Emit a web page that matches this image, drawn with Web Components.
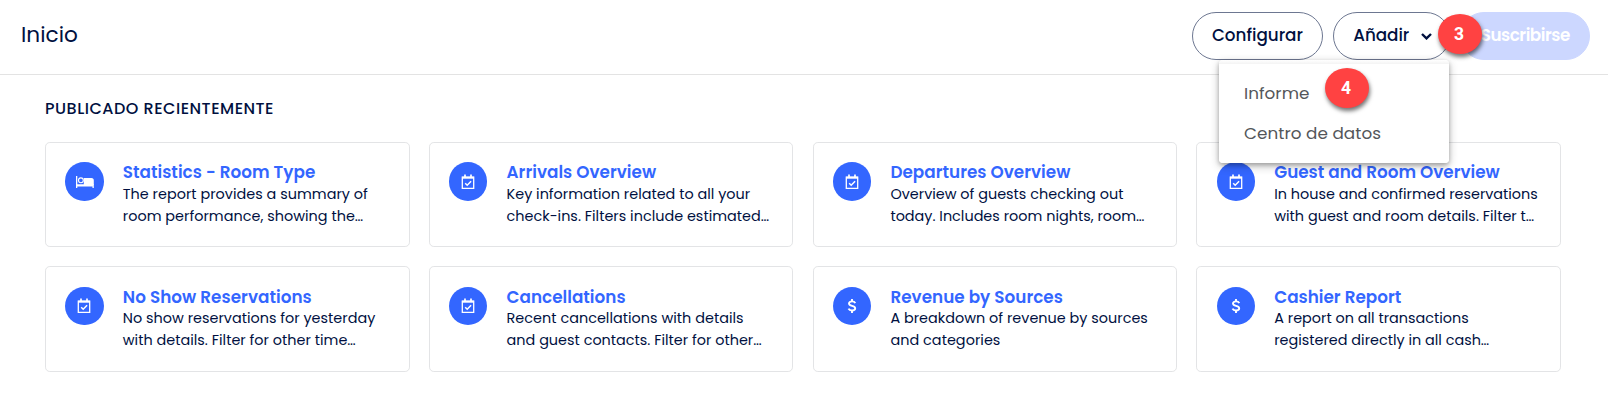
<!DOCTYPE html>
<html lang="es">
<head>
<meta charset="utf-8">
<title>Inicio</title>
<style>
	body {
		margin: 0;
		background: #fff;
		--color-ink: #00103f;
		--color-primary: #3366ff;
		--color-line: #e3e4e6;
		color: var(--color-ink);
		font-family: Poppins, Inter, "Liberation Sans", sans-serif;
		font-feature-settings: "cv11";
	}
</style>
</head>
<body>
<reports-home></reports-home>

<script>
// One line of text, spaced out to the width given in the attribute
class FitLine extends HTMLElement {
	constructor(){
		super();
		this.attachShadow({ mode: 'open' });
		this.shadowRoot.innerHTML = `
			<style>
				:host { display: block; white-space: nowrap; }
			</style>
			<span><slot></slot></span>`;
	}

	connectedCallback(){
		const span = this.shadowRoot.querySelector('span');
		const width = Number(this.getAttribute('width'));
		const natural = span.getBoundingClientRect().width;
		const count = this.textContent.length;
		if (width && natural) {
			this.style.width = width + 'px';
			this.style.letterSpacing = ((width - natural) / count) + 'px';
		}
	}
}

const ICONS = {
	bed: `<svg width="19" height="12" viewBox="-1 0 19 12" fill="#fff">
		<path d="M0 0h1.300v8.300H17.800V12h-1.300v-1.400H1.300V12H0z"/>
		<circle cx="4.900" cy="4.300" r="2.400" fill="none" stroke="#fff" stroke-width="1.100"/>
		<path d="M7.800 2h7.600a2.400 2.400 0 0 1 2.400 2.500V9H7.800z"/>
	</svg>`,
	calendar: `<svg width="14" height="16" viewBox="0 0 14 16" fill="none" stroke="#fff">
		<path d="M1.300 3.200h11.400v11.100H1.300z" stroke-width="1.300"/>
		<path d="M1 3.700h12" stroke-width="2"/>
		<path d="M4 .5v3M10 .5v3" stroke-width="1.700"/>
		<path d="M4.200 9.300l2 2 3.900-4" stroke-width="1.500"/>
	</svg>`,
	dollar: `<svg width="10" height="16" viewBox="0 0 10 16" fill="none" stroke="#fff">
		<path d="M8.300 5.100C7.700 3.900 6.600 3.400 5 3.400c-1.800 0-3 .8-3 2.100 0 3.100 6.200 1.500 6.200 4.800 0 1.400-1.300 2.200-3.200 2.200-1.700 0-2.900-.6-3.500-1.900" stroke-width="1.900"/>
		<path d="M5 1v2.500M5 12.400v2.500" stroke-width="1.900"/>
	</svg>`
};

class ReportCard extends HTMLElement {
	constructor(){
		super();
		this.attachShadow({ mode: 'open' });
		this.shadowRoot.innerHTML = `
			<style>
				:host {
					display: flex;
					gap: 19.2px;
					box-sizing: border-box;
					height: 105.3px;
					padding: 19.35px 19.2px 19.2px;
					border: 1px solid var(--color-line);
					border-radius: 4.8px;
					font-size: 14.4px;
					line-height: 21.6px;
				}
				.icon {
					display: flex;
					flex: none;
					align-items: center;
					justify-content: center;
					width: 38.4px;
					height: 38.4px;
					border-radius: 50%;
					background: var(--color-primary);
				}
				.title {
					color: var(--color-primary);
					font-size: 16.8px;
					font-weight: 600;
				}
			</style>
			<div class="icon">${ICONS[this.getAttribute('icon')]}</div>
			<div>
				<div class="title"><slot name="title"></slot></div>
				<slot></slot>
			</div>`;
	}
}

class PillButton extends HTMLElement {
	constructor(){
		super();
		this.attachShadow({ mode: 'open' });
		this.shadowRoot.innerHTML = `
			<style>
				:host {
					display: flex;
					align-items: center;
					gap: 12px;
					box-sizing: border-box;
					height: 48px;
					padding: 0 19.2px 2px;
					border: 1px solid #6d7791;
					border-radius: 24px;
					font-size: 16.8px;
					font-weight: 500;
					line-height: 24px;
				}
				:host([disabled]) {
					border-color: #ccd7ff;
					background: #ccd7ff;
					color: #fff;
					font-weight: 600;
				}
				::slotted(svg) { margin: 2px -2px 0 0; }
			</style>
			<slot></slot>
			<slot name="suffix"></slot>`;
	}
}

class DropMenu extends HTMLElement {
	constructor(){
		super();
		this.attachShadow({ mode: 'open' });
		this.shadowRoot.innerHTML = `
			<style>
				:host {
					display: flex;
					flex-direction: column;
					box-sizing: border-box;
					width: 230px;
					height: 103px;
					padding: 13px 25px 10px;
					border-radius: 4px;
					background: linear-gradient(#fff, #f5f5f5 3.5px, #fff 4px);
					box-shadow: 0 2px 4px rgba(0,0,0,.24), 0 3px 10px rgba(0,0,0,.24);
					color: #54565a;
					font-size: 16.8px;
					line-height: 40px;
				}
			</style>
			<slot></slot>`;
	}
}

class StepBadge extends HTMLElement {
	constructor(){
		super();
		this.attachShadow({ mode: 'open' });
		this.shadowRoot.innerHTML = `
			<style>
				:host {
					display: flex;
					align-items: center;
					justify-content: center;
					box-sizing: border-box;
					width: 44px;
					height: 40px;
					padding-right: 2px;
					border-radius: 50%;
					background: #ff4242;
					box-shadow: 1px 3px 4px rgba(0,0,0,.55);
					color: #fff;
					font: bold 17.5px Roboto, "Liberation Sans", sans-serif;
				}
			</style>
			<slot></slot>`;
	}
}

const REPORTS = [
	['bed', 'Statistics - Room Type', 192.5, 'The report provides a summary of', 245, 'room performance, showing the…', 240.5],
	['calendar', 'Arrivals Overview', 149.5, 'Key information related to all your', 243.5, 'check-ins. Filters include estimated…', 262.5],
	['calendar', 'Departures Overview', 180, 'Overview of guests checking out', 233, 'today. Includes room nights, room…', 254],
	['calendar', 'Guest and Room Overview', 225.5, 'In house and confirmed reservations', 263.5, 'with guest and room details. Filter t…', 260],
	['calendar', 'No Show Reservations', 189, 'No show reservations for yesterday', 252.5, 'with details. Filter for other time…', 233],
	['calendar', 'Cancellations', 119, 'Recent cancellations with details', 237, 'and guest contacts. Filter for other…', 255],
	['dollar', 'Revenue by Sources', 172.5, 'A breakdown of revenue by sources', 257.5, 'and categories', 110],
	['dollar', 'Cashier Report', 127, 'A report on all transactions', 194.5, 'registered directly in all cash…', 215]
];

class ReportsHome extends HTMLElement {
	constructor(){
		super();
		this.attachShadow({ mode: 'open' });
		this.shadowRoot.innerHTML = `
			<style>
				:host { display: block; position: relative; height: 402px; overflow: hidden; }
				header {
					display: flex;
					align-items: flex-start;
					justify-content: space-between;
					box-sizing: border-box;
					height: 75px;
					padding: 12px 18px 0 21px;
					border-bottom: 1px solid #e3e3e3;
				}
				h1 { margin: 9px 0 0; font-size: 21.6px; font-weight: 400; line-height: 28px; }
				nav { display: flex; gap: 10px; }
				main { padding: 21px 46.9px 0 45px; }
				h2 { margin: 0 0 21px; font-size: 16px; font-weight: 500; line-height: 25px; }
				.grid { display: grid; grid-template-columns: repeat(4, 1fr); gap: 19.2px; }
				drop-menu { position: absolute; left: 1219px; top: 60px; }
				.step-3 { position: absolute; left: 1438px; top: 14px; }
				.step-4 { position: absolute; left: 1325px; top: 68px; }
			</style>
			<header>
				<h1><fit-line width="57">Inicio</fit-line></h1>
				<nav>
					<pill-button><fit-line width="91">Configurar</fit-line></pill-button>
					<pill-button>
						<fit-line width="56">Añadir</fit-line>
						<svg slot="suffix" width="11" height="7" viewBox="0 0 11 7" fill="none" stroke="#00103f" stroke-width="2.4"><path d="M1 1l4.500 4.400L10 1"/></svg>
					</pill-button>
					<pill-button disabled><fit-line width="89.2">Suscribirse</fit-line></pill-button>
				</nav>
			</header>
			<main>
				<h2><fit-line width="229">PUBLICADO RECIENTEMENTE</fit-line></h2>
				<div class="grid">
					${REPORTS.map(([icon, title, tw, line1, w1, line2, w2]) => `
					<report-card icon="${icon}">
						<fit-line slot="title" width="${tw}">${title}</fit-line>
						<fit-line width="${w1}">${line1}</fit-line>
						<fit-line width="${w2}">${line2}</fit-line>
					</report-card>`).join('')}
				</div>
			</main>
			<drop-menu>
				<fit-line width="65.5">Informe</fit-line>
				<fit-line width="137">Centro de datos</fit-line>
			</drop-menu>
			<step-badge class="step-3">3</step-badge>
			<step-badge class="step-4">4</step-badge>`;
	}
}

// Containers go first, so that a line is measured in its final font
window.customElements.define('report-card', ReportCard);
window.customElements.define('pill-button', PillButton);
window.customElements.define('drop-menu', DropMenu);
window.customElements.define('step-badge', StepBadge);
window.customElements.define('reports-home', ReportsHome);
window.customElements.define('fit-line', FitLine);
</script>
</body>
</html>
